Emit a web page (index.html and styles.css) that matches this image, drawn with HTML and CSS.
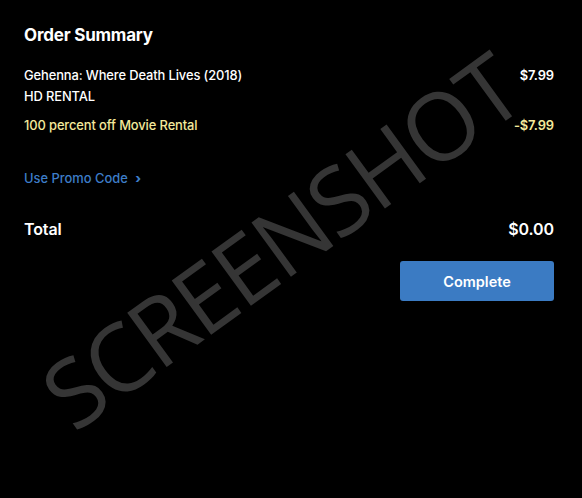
FILE: index.html
```html
<!DOCTYPE html>
<html lang="en">
<head>
    <meta charset="UTF-8">
    <meta name="viewport" content="width=device-width, initial-scale=1.0">
    <title>Order Summary</title>
    <link rel="stylesheet" href="styles.css">
</head>
<body>
    <div class="summary">
        <h2>Order Summary</h2>

        <div class="line">
            <div class="item">
                <div>Gehenna: Where Death Lives (2018)</div>
                <div>HD RENTAL</div>
            </div>
            <div class="price">$7.99</div>
        </div>
        <div class="line discount">
            <div>100 percent off Movie Rental</div>
            <div class="price">-$7.99</div>
        </div>

        <a class="promo" href="#">Use Promo Code <span class="chev">&rsaquo;</span></a>

        <div class="line total">
            <div>Total</div>
            <div class="price">$0.00</div>
        </div>
        <div class="actions">
            <button id="completeButton">Complete</button>
        </div>
    </div>
    <div class="watermark">SCREENSHOT</div>
</body>
</html>
```

FILE: styles.css
```css
body {
    font-family: Inter, Lato, sans-serif;
    background-color: #000;
    color: #fff;
    margin: 0;
    padding: 0;
    width: 582px;
    height: 498px;
    overflow: hidden;
    position: relative;
}
.summary {
    padding: 25px 28px 0 24px;
    position: relative;
    z-index: 1;
}
h2 {
    font-size: 17px;
    font-weight: 700;
    letter-spacing: -0.2px;
    margin: 0 0 20px;
}
.line {
    display: flex;
    justify-content: space-between;
    align-items: flex-start;
    font-size: 12.9px;
    font-weight: 500;
    line-height: 21px;
    letter-spacing: -0.1px;
}
.price {
    font-weight: 600;
}
.discount {
    color: #f4e99b;
    margin-top: 8px;
}
.promo {
    display: inline-block;
    margin-top: 35px;
    color: #3d7dc8;
    font-size: 12.9px;
    font-weight: 500;
    text-decoration: none;
}
.chev {
    font-weight: 800;
    margin-left: 4px;
}
.total {
    margin-top: 32px;
    font-size: 16px;
    font-weight: 600;
}
.actions {
    display: flex;
    justify-content: flex-end;
    margin-top: 21px;
}
button {
    width: 154px;
    height: 40px;
    background-color: #3b7bc3;
    color: #fff;
    border: none;
    border-radius: 3px;
    font-family: Inter, sans-serif;
    font-size: 14.5px;
    font-weight: 600;
    cursor: pointer;
}
.watermark {
    position: absolute;
    left: 81px;
    top: 349px;
    font-family: "Open Sans", sans-serif;
    font-weight: 400;
    font-size: 94px;
    line-height: 94px;
    color: #353535;
    transform: rotate(-36deg);
    transform-origin: 0 100%;
    white-space: nowrap;
    letter-spacing: -3px;
}
```
